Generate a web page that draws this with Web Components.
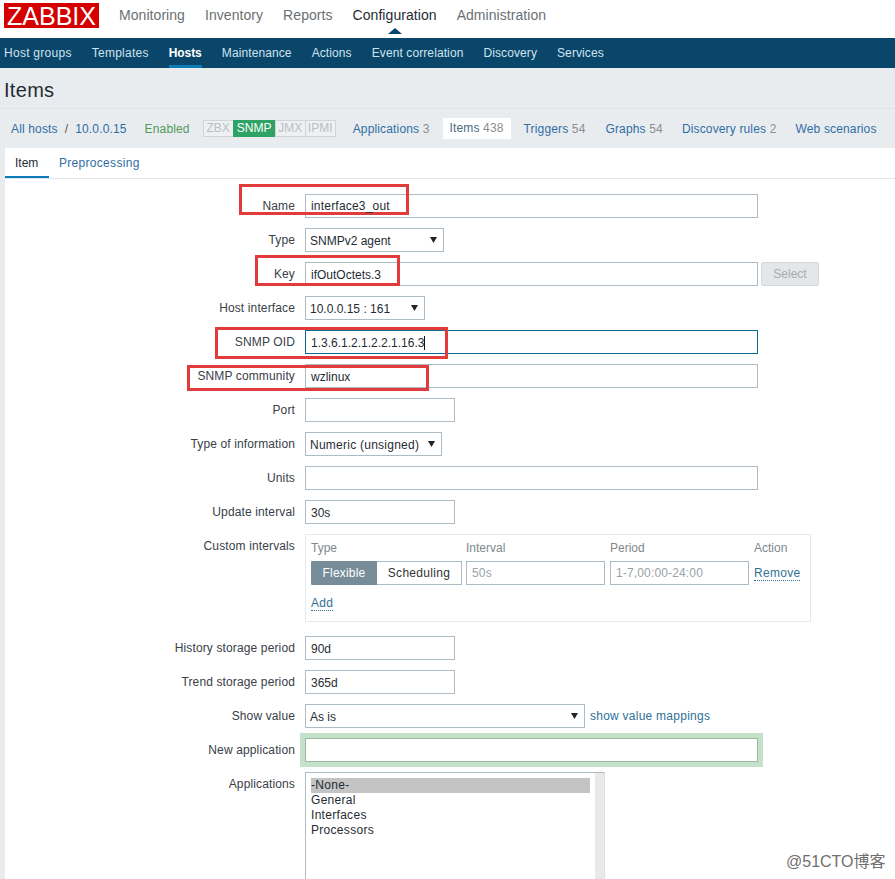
<!DOCTYPE html>
<html><head><meta charset="utf-8"><title>Items</title>
<style>
html,body{margin:0;padding:0;height:879px;overflow:hidden}
body{background:#e9ecef;font:12px "Liberation Sans",Arial,sans-serif;color:#1f2c33;position:relative}
</style></head><body>
<zbx-topnav></zbx-topnav>
<zbx-subnav></zbx-subnav>
<zbx-title>Items</zbx-title>
<zbx-hostbar></zbx-hostbar>
<zbx-panel>
  <zbx-row label="Name"><zbx-input value="interface3_out" w="453" ls=".2" style="line-height:23px"></zbx-input><zbx-mark style="left:-66px;top:-10px;width:164px;height:25px"></zbx-mark></zbx-row>
  <zbx-row label="Type"><zbx-select value="SNMPv2 agent" w="139"></zbx-select></zbx-row>
  <zbx-row label="Key"><zbx-input value="ifOutOctets.3" w="453"></zbx-input><zbx-btn>Select</zbx-btn><zbx-mark style="left:-50px;top:-7px;width:139px;height:25px"></zbx-mark></zbx-row>
  <zbx-row label="Host interface"><zbx-select value="10.0.0.15 : 161" w="120"></zbx-select></zbx-row>
  <zbx-row label="SNMP OID"><zbx-input value="1.3.6.1.2.1.2.2.1.16.3" w="453" focus caret></zbx-input><zbx-mark style="left:-90px;top:-3px;width:227px;height:26px"></zbx-mark></zbx-row>
  <zbx-row label="SNMP community"><zbx-input value="wzlinux" w="453"></zbx-input><zbx-mark style="left:-118px;top:1px;width:236px;height:20px"></zbx-mark></zbx-row>
  <zbx-row label="Port"><zbx-input value="" w="150"></zbx-input></zbx-row>
  <zbx-row label="Type of information"><zbx-select value="Numeric (unsigned)" w="137" ls=".25"></zbx-select></zbx-row>
  <zbx-row label="Units"><zbx-input value="" w="453"></zbx-input></zbx-row>
  <zbx-row label="Update interval"><zbx-input value="30s" w="150"></zbx-input></zbx-row>
  <zbx-row label="Custom intervals" tall><zbx-intervals></zbx-intervals></zbx-row>
  <zbx-row label="History storage period"><zbx-input value="90d" w="150"></zbx-input></zbx-row>
  <zbx-row label="Trend storage period"><zbx-input value="365d" w="150"></zbx-input></zbx-row>
  <zbx-row label="Show value"><zbx-select value="As is" w="280"></zbx-select><zbx-link>show value mappings</zbx-link></zbx-row>
  <zbx-row label="New application"><zbx-input value="" w="453" glow></zbx-input></zbx-row>
  <zbx-row label="Applications" tall><zbx-listbox></zbx-listbox></zbx-row>
</zbx-panel>
<zbx-watermark>@51CTO博客</zbx-watermark>
<script>
function el(name, css, html){
  customElements.define(name, class extends HTMLElement{
    connectedCallback(){
      if(this.shadowRoot) return;
      const s=this.attachShadow({mode:'open'});
      s.innerHTML='<style>'+css+'</style>'+(typeof html==='function'?html(this):html);
    }
  });
}
el('zbx-topnav',`:host{display:flex;align-items:center;height:38px;background:#fff;box-sizing:border-box;position:relative}
.logo{margin:0 0 7px 4px;width:95px;height:25px;background:#d40000;color:#fff;font-size:25px;line-height:26px;text-align:center}
nav{display:flex;gap:20px;margin:0 0 8px 20px;font-size:14px;color:#6a6f73;letter-spacing:.06px}
.on{color:#1f2c33;position:relative}
.on:after{content:"";position:absolute;left:50%;margin-left:-7px;bottom:-11px;border:7px solid transparent;border-top:0;border-bottom:6px solid #0a466a}`,
`<div class="logo">ZABBIX</div><nav><span>Monitoring</span><span>Inventory</span><span>Reports</span><span class="on">Configuration</span><span>Administration</span></nav>`);
el('zbx-subnav',`:host{display:flex;gap:20px;height:30px;background:#0a466a;padding-left:4px;box-sizing:border-box;color:#cfe3ef;line-height:31px;letter-spacing:.1px}
.w{letter-spacing:.27px}
.on{color:#fff;font-weight:bold;letter-spacing:-.1px;width:33px;box-shadow:inset 0 -3px 0 #0f7ab8}`,
`<span class="w">Host groups</span><span class="w">Templates</span><span class="on">Hosts</span><span>Maintenance</span><span>Actions</span><span>Event correlation</span><span>Discovery</span><span>Services</span>`);
el('zbx-title',`:host{display:block;height:41px;box-sizing:border-box;padding:10px 0 0 4px;font-size:20px;line-height:24px;letter-spacing:.3px;color:#1f2c33;border-bottom:1px solid #dfe4e7}`,`<slot></slot>`);
el('zbx-hostbar',`:host{display:flex;align-items:center;height:39px;box-sizing:border-box;padding:0 0 0 11px;color:#2f6ea3;white-space:nowrap;letter-spacing:.15px}
.sep{margin:0 7px 0 7px;color:#555}
.en{color:#4f9a5c;margin:0 13px 0 18px}
.st{display:flex;height:17px;line-height:15px;margin-right:17px;letter-spacing:0}
.st span{box-sizing:border-box;width:31px;text-align:center;border:1px solid #cfd5d9;color:#b9bfc3;margin-left:-1px;background:#eef0f2}
.st span:first-child{margin-left:0}
.st span.g{width:43px;background:#2fa366;border-color:#2fa366;color:#fff}
.n{color:#8a8f93}
.a{margin-right:19px}
.ap{margin-right:13px}
.t{margin-right:20px}
.cur{background:#fff;padding:0 7px;line-height:21px;height:21px;color:#4a6c84;margin:0 13px 0 0}`,
`<span>All hosts</span><span class="sep">/</span><span>10.0.0.15</span><span class="en">Enabled</span><div class="st"><span>ZBX</span><span class="g">SNMP</span><span>JMX</span><span>IPMI</span></div><span class="ap">Applications <span class="n">3</span></span><span class="cur">Items <span class="n">438</span></span><span class="t">Triggers <span class="n">54</span></span><span class="a">Graphs <span class="n">54</span></span><span class="a">Discovery rules <span class="n">2</span></span><span>Web scenarios</span>`);
el('zbx-panel',`:host{display:block;margin:0 0 0 5px;background:#fff;height:731px;overflow:hidden}
.tabs{display:flex;height:30px;border-bottom:1px solid #e3e7ea;line-height:30px}
.tabs span{padding:0 10px;color:#2f6ea3;letter-spacing:.3px}
.tabs .on{color:#1f2c33;box-shadow:inset 0 -2px 0 #0f7ab8;width:34px;padding:0 0 0 10px;letter-spacing:0}
.form{padding-top:15px;display:flex;flex-direction:column}`,
`<div class="tabs"><span class="on">Item</span><span>Preprocessing</span></div><div class="form"><slot></slot></div>`);
el('zbx-row',`:host{display:grid;grid-template-columns:290px 1fr;column-gap:10px;min-height:34px;position:relative}
label{text-align:right;line-height:24px;color:#384048;height:22px;white-space:nowrap;letter-spacing:.13px}
.f{display:flex;align-items:flex-start;position:relative}`,
t=>`<label>${t.getAttribute('label')}</label><div class="f"><slot></slot></div>`);
el('zbx-input',`:host{display:block;flex:none;box-sizing:border-box;height:24px;border:1px solid #acbbc4;background:#fff;padding:0 5px;line-height:24px;color:#1f2c33;position:relative;white-space:nowrap}
.v{position:relative;z-index:2}
.c{display:inline-block;width:1px;height:14px;background:#111;vertical-align:-3px}`,t=>{
  t.style.width=t.getAttribute('w')+'px';
  if(t.hasAttribute('ls')) t.style.letterSpacing=t.getAttribute('ls')+'px';
  if(t.hasAttribute('focus')) t.style.borderColor='#0f6a92';
  if(t.hasAttribute('glow')) t.style.cssText+=';box-shadow:0 0 0 5px #c3e2c9;border-color:#9bb8a3;';
  return '<span class="v">'+(t.getAttribute('value')||'')+'</span>'+(t.hasAttribute('caret')?'<i class="c"></i>':'');
});
el('zbx-select',`:host{display:block;flex:none;box-sizing:border-box;height:24px;border:1px solid #acbbc4;background:#fff;padding:0 0 0 4px;line-height:24px;color:#1f2c33;position:relative;white-space:nowrap}
svg{position:absolute;right:6px;top:8px}`,t=>{
  t.style.width=t.getAttribute('w')+'px';
  if(t.hasAttribute('ls')) t.style.letterSpacing=t.getAttribute('ls')+'px';
  return t.getAttribute('value')+'<svg width="7" height="6" viewBox="0 0 7 6"><path d="M0 0h7L3.5 6z" fill="#222"/></svg>';
});
el('zbx-btn',`:host{display:block;flex:none;box-sizing:border-box;margin-left:3px;width:58px;height:24px;background:#e4e7e9;border:1px solid #d3d8db;color:#a6acb0;text-align:center;line-height:22px;border-radius:2px}`,`<slot></slot>`);
el('zbx-link',`:host{display:block;flex:none;margin-left:5px;color:#2f7195;line-height:25px;letter-spacing:.25px}`,`<slot></slot>`);
el('zbx-mark',`:host{display:block;position:absolute;border:3px solid #e23b3b;pointer-events:none}`,``);
el('zbx-intervals',`:host{display:block;box-sizing:border-box;width:506px;height:88px;border:1px solid #e6e9eb;margin-bottom:14px;padding:5px 0 0 5px;color:#7f878c}
.h{display:grid;grid-template-columns:155px 144px 144px auto;line-height:16px;height:21px}
.r{display:grid;grid-template-columns:151px 4px 139px 5px 139px 5px auto;align-items:center;height:24px}
.sw{display:flex;height:24px;box-sizing:border-box;border:1px solid #acbbc4;border-left:0;line-height:22px;color:#333}
.sw b{font-weight:normal;letter-spacing:.2px;background:#768d99;color:#fff;width:66px;text-align:center;margin-top:-1px;margin-bottom:-1px;line-height:24px;border-radius:2px 0 0 2px}
.sw span{flex:1;text-align:center;letter-spacing:.3px}
.i{box-sizing:border-box;height:24px;border:1px solid #acbbc4;line-height:22px;padding:0 5px;color:#9aa2a7;letter-spacing:.15px}
a{color:#2f7195;border-bottom:1px dotted #2f7195;line-height:14px;width:max-content;display:block;letter-spacing:.3px}
.ad{margin-top:11px}`,
`<div class="h"><span>Type</span><span>Interval</span><span>Period</span><span>Action</span></div>
<div class="r"><div class="sw"><b>Flexible</b><span>Scheduling</span></div><i></i><div class="i">50s</div><i></i><div class="i">1-7,00:00-24:00</div><i></i><a>Remove</a></div>
<a class="ad">Add</a>`);
el('zbx-listbox',`:host{display:block;box-sizing:border-box;width:300px;height:200px;border:1px solid #acbbc4;border-right-color:#e0e0e0;padding:5px 14px 0 5px;position:relative;color:#1f2c33;line-height:15px;letter-spacing:.3px}
div{height:15px}
.s{background:#c4c4c4}
.bar{position:absolute;right:0;top:0;bottom:0;width:9px;background:#e9e9e9;height:auto}`,
`<div class="s">-None-</div><div>General</div><div>Interfaces</div><div>Processors</div><div class="bar"></div>`);
el('zbx-watermark',`:host{position:absolute;left:786px;top:848px;font:16px "Liberation Sans","Noto Sans CJK SC",sans-serif;color:#6e6e6e;white-space:nowrap;text-shadow:0 0 2px #fff}`,`<slot></slot>`);
</script>
</body></html>
